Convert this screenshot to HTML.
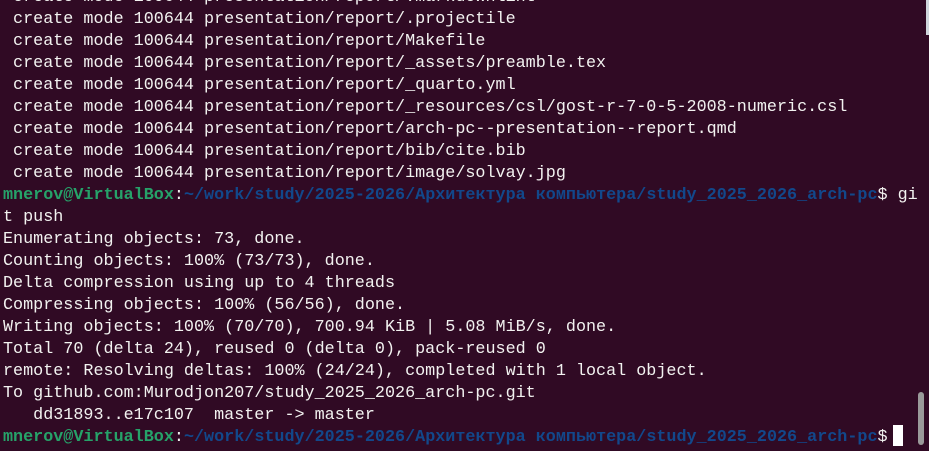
<!DOCTYPE html>
<html><head><meta charset="utf-8"><style>
html,body{margin:0;padding:0;width:929px;height:451px;overflow:hidden;background:#300a24;}
pre{position:absolute;left:3px;top:-13px;margin:0;font-family:"Liberation Mono","DejaVu Sans Mono",monospace;font-size:16.75px;line-height:22px;color:#f2f2f0;white-space:pre;}
.g{color:#26a269;font-weight:bold}
.b{color:#12488b;font-weight:bold}
#cur{position:absolute;left:893px;top:425px;width:10px;height:21px;background:#fff}
#sb{position:absolute;left:918px;top:392px;width:6px;height:53px;background:#9a9a9a;border-radius:3px}
#edge{position:absolute;left:926px;top:0;width:3px;height:35px;background:#cfd6dc}
</style></head><body>
<pre> create mode 100644 presentation/report/.markdownlint
 create mode 100644 presentation/report/.projectile
 create mode 100644 presentation/report/Makefile
 create mode 100644 presentation/report/_assets/preamble.tex
 create mode 100644 presentation/report/_quarto.yml
 create mode 100644 presentation/report/_resources/csl/gost-r-7-0-5-2008-numeric.csl
 create mode 100644 presentation/report/arch-pc--presentation--report.qmd
 create mode 100644 presentation/report/bib/cite.bib
 create mode 100644 presentation/report/image/solvay.jpg
<span class="g">mnerov@VirtualBox</span>:<span class="b">~/work/study/2025-2026/Архитектура компьютера/study_2025_2026_arch-pc</span>$ gi
t push
Enumerating objects: 73, done.
Counting objects: 100% (73/73), done.
Delta compression using up to 4 threads
Compressing objects: 100% (56/56), done.
Writing objects: 100% (70/70), 700.94 KiB | 5.08 MiB/s, done.
Total 70 (delta 24), reused 0 (delta 0), pack-reused 0
remote: Resolving deltas: 100% (24/24), completed with 1 local object.
To github.com:Murodjon207/study_2025_2026_arch-pc.git
   dd31893..e17c107  master -&gt; master
<span class="g">mnerov@VirtualBox</span>:<span class="b">~/work/study/2025-2026/Архитектура компьютера/study_2025_2026_arch-pc</span>$ </pre>
<div id="cur"></div><div id="sb"></div><div id="edge"></div>
</body></html>
